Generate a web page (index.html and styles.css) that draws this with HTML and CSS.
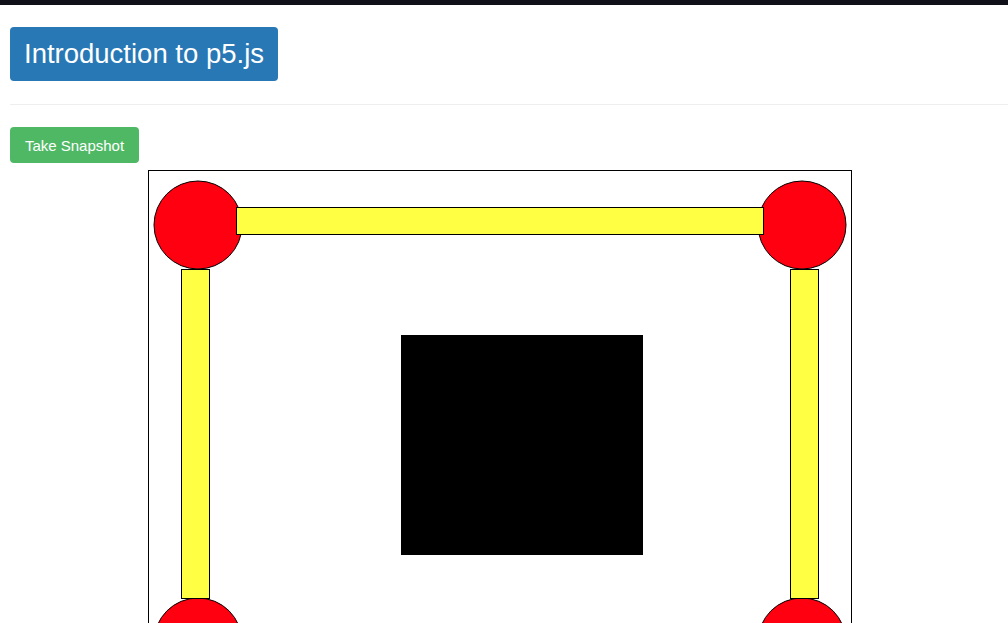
FILE: index.html
```html
<!DOCTYPE html>
<html>
<head>
<meta charset="utf-8">
<link rel="stylesheet" href="styles.css">
</head>
<body>
<div class="topbar"></div>
<div class="page">
  <header class="header">
    <h1 class="title">Introduction to p5.js</h1>
  </header>
  <hr class="rule">
  <button class="snap">Take Snapshot</button>
  <div class="stage">
    <svg class="canvas" width="702" height="700" viewBox="0 0 702 700">
      <g stroke="#000" stroke-width="1">
        <circle cx="49" cy="54" r="44" fill="#ff0010"/>
        <circle cx="653" cy="54" r="44" fill="#ff0010"/>
        <circle cx="49" cy="471" r="44" fill="#ff0010"/>
        <circle cx="653" cy="471" r="44" fill="#ff0010"/>
        <rect x="87.5" y="36.5" width="527" height="27" fill="#ffff44"/>
        <rect x="32.5" y="98.5" width="28" height="329" fill="#ffff44"/>
        <rect x="641.5" y="98.5" width="28" height="329" fill="#ffff44"/>
        <rect x="252.5" y="164.5" width="241" height="219" fill="#000"/>
      </g>
    </svg>
  </div>
</div>
</body>
</html>
```
FILE: styles.css
```css
html, body {
  margin: 0;
  padding: 0;
  background: #fff;
  overflow: hidden;
  font-family: "Liberation Sans", Arial, sans-serif;
}
.topbar {
  height: 5px;
  background: #101018;
}
.page {
  padding: 22px 0 0 10px;
}
.header {
  display: flex;
}
.title {
  margin: 0;
  background: #2778b5;
  color: #fff;
  font-weight: normal;
  font-size: 27.5px;
  line-height: 32px;
  padding: 11px 14px 11px 14px;
  border-radius: 4px;
}
.rule {
  border: 0;
  border-top: 1px solid #eee;
  margin: 23px 0 22px 0;
}
.snap {
  display: block;
  background: #4fb865;
  color: #fff;
  border: 0;
  border-radius: 4px;
  font-family: "Liberation Sans", Arial, sans-serif;
  font-size: 15px;
  height: 36px;
  width: 129px;
  padding: 0;
}
.stage {
  padding: 7px 0 0 138px;
}
.canvas {
  display: block;
  border: 1px solid #000;
}
```
